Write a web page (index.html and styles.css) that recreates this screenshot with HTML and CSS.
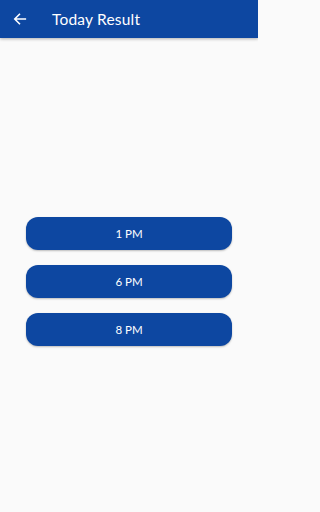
FILE: index.html
```html
<!DOCTYPE html>
<html>
<head>
<meta charset="utf-8">
<link rel="stylesheet" href="styles.css">
</head>
<body>
<header class="appbar">
  <svg class="back" width="14" height="14" viewBox="0 0 16 16"><path d="M15 8H2.5M8 2L2 8l6 6" fill="none" stroke="#fff" stroke-width="1.8"/></svg>
  <span class="title">Today Result</span>
</header>
<main class="content">
  <button class="slot">1 PM</button>
  <button class="slot">6 PM</button>
  <button class="slot">8 PM</button>
</main>
</body>
</html>
```
FILE: styles.css
```css
html, body { margin: 0; padding: 0; }
html { background: #fafafa; }
body {
  width: 258px;
  height: 512px;
  background: #fafafa;
  font-family: "Lato", "Open Sans", sans-serif;
  overflow: hidden;
}
.appbar {
  height: 38px;
  background: #0d47a1;
  display: flex;
  align-items: center;
  padding-left: 13px;
  box-shadow: 0 1px 3px rgba(0,0,0,0.3);
  position: relative;
  z-index: 1;
}
.back { display: block; }
.title {
  color: #fff;
  font-size: 15.5px;
  margin-left: 25px;
  letter-spacing: 0.2px;
}
.content {
  display: flex;
  flex-direction: column;
  align-items: center;
  gap: 15px;
  padding-top: 179px;
}
.slot {
  width: 206px;
  height: 33px;
  border: none;
  border-radius: 12px;
  background: #0d47a1;
  color: #fff;
  font-family: "Lato", "Open Sans", sans-serif;
  font-size: 11.5px;
  box-shadow: 0 1px 2px rgba(0,0,0,0.25);
  padding: 0;
}
```
